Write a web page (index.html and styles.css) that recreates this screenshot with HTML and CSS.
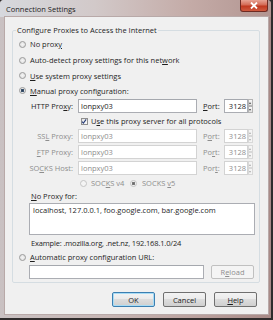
FILE: index.html
```html
<!DOCTYPE html>
<html lang="en">
<head>
    <meta charset="UTF-8">
    <title>Connection Settings</title>
    <link rel="stylesheet" href="styles.css">
</head>
<body>
    <div class="window">
        <div class="titlebar">
            <span class="title">Connection Settings</span>
            <span class="close-btn">
                <svg width="10" height="7" viewBox="0 0 10 7"><path d="M2 0.5 L8 6.5 M8 0.5 L2 6.5" stroke="#fff" stroke-width="1.8"/></svg>
            </span>
        </div>

        <div class="client">
            <fieldset class="group">
                <legend>Configure Proxies to Access the Internet</legend>

                <div class="opt"><span class="radio"></span><span>No prox<u>y</u></span></div>
                <div class="opt"><span class="radio"></span><span>Auto-detect proxy settings for this net<u>w</u>ork</span></div>
                <div class="opt short"><span class="radio"></span><span><u>U</u>se system proxy settings</span></div>
                <div class="opt short"><span class="radio checked"></span><span><u>M</u>anual proxy configuration:</span></div>

                <div class="proxy-row">
                    <label class="plabel">HTTP Pro<u>x</u>y:</label>
                    <div class="field host">lonpxy03</div>
                    <label class="port-label"><u>P</u>ort:</label>
                    <div class="field port">3128</div>
                    <div class="spin"><span class="up"></span><span class="down"></span></div>
                </div>

                <div class="check-row">
                    <span class="checkbox">
                        <svg width="7" height="7" viewBox="0 0 7 7"><path d="M1.2 3.6 L2.8 5.4 L6 1" fill="none" stroke="#2a3f7a" stroke-width="1.3"/></svg>
                    </span>
                    <span>U<u>s</u>e this proxy server for all protocols</span>
                </div>

                <div class="proxy-row disabled">
                    <label class="plabel">SS<u>L</u> Proxy:</label>
                    <div class="field host">lonpxy03</div>
                    <label class="port-label">P<u>o</u>rt:</label>
                    <div class="field port">3128</div>
                    <div class="spin"><span class="up"></span><span class="down"></span></div>
                </div>

                <div class="proxy-row disabled">
                    <label class="plabel"><u>F</u>TP Proxy:</label>
                    <div class="field host">lonpxy03</div>
                    <label class="port-label">Po<u>r</u>t:</label>
                    <div class="field port">3128</div>
                    <div class="spin"><span class="up"></span><span class="down"></span></div>
                </div>

                <div class="proxy-row disabled">
                    <label class="plabel">SO<u>C</u>KS Host:</label>
                    <div class="field host">lonpxy03</div>
                    <label class="port-label">Por<u>t</u>:</label>
                    <div class="field port">3128</div>
                    <div class="spin"><span class="up"></span><span class="down"></span></div>
                </div>

                <div class="socks-row disabled">
                    <span class="radio"></span><span class="socks4">SOC<u>K</u>S v4</span>
                    <span class="radio checked"></span><span>SOCKS <u>v</u>5</span>
                </div>

                <div class="noproxy-label"><u>N</u>o Proxy for:</div>
                <div class="textarea">localhost, 127.0.0.1, foo.google.com, bar.google.com</div>
                <div class="example">Example: .mozilla.org, .net.nz, 192.168.1.0/24</div>

                <div class="opt"><span class="radio"></span><span><u>A</u>utomatic proxy configuration URL:</span></div>
                <div class="url-row">
                    <div class="field url"></div>
                    <div class="btn disabled-btn"><span>R<u>e</u>load</span></div>
                </div>
            </fieldset>

            <div class="buttons">
                <div class="btn default">OK</div>
                <div class="btn">Cancel</div>
                <div class="btn"><span><u>H</u>elp</span></div>
            </div>
        </div>
    </div>
</body>
</html>
```

FILE: styles.css
```css
body {
    margin: 0;
    background-color: #2f2c2c;
    font-family: "Open Sans", "Noto Sans", sans-serif;
    font-size: 7.5px;
    color: #1e1e1e;
}

u {
    text-decoration-thickness: 1px;
    text-underline-offset: 1px;
}

.window {
    width: 271px;
    height: 318px;
    display: flex;
    flex-direction: column;
    background: linear-gradient(90deg, #c9c1c2 0%, #c7b6b4 40%, #b99f9c 75%, #a88a87 100%);
    border-radius: 4px 4px 0 0;
}

.titlebar {
    height: 17px;
    display: flex;
    align-items: flex-start;
    background: linear-gradient(90deg, #d6d8dd 0%, #d2c9c9 35%, #c4aba7 70%, #b29591 100%);
    border-radius: 4px 4px 0 0;
}

.title {
    margin: 4px 0 0 6px;
    line-height: 10px;
    color: #222;
}

.close-btn {
    margin-left: auto;
    margin-right: 3px;
    width: 28px;
    height: 12px;
    box-sizing: border-box;
    border: 1px solid #6e2a22;
    border-top: none;
    border-radius: 0 0 3px 3px;
    background: linear-gradient(180deg, #e7a394 0%, #d46a55 45%, #c0381f 55%, #cf5a40 100%);
    display: flex;
    align-items: center;
    justify-content: center;
}

.client {
    flex: 1;
    margin: 0 3px 4px 5px;
    background-color: #f0f0f0;
    box-shadow: 0 0 0 1px #b8a9a8;
    display: flex;
    flex-direction: column;
}

.group {
    margin: 8px 8px 0 7px;
    padding: 1px 0 3px 0;
    border: 1px solid #d5dde2;
    border-radius: 2px;
    min-width: 0;
}

.group legend {
    margin-left: 3px;
    padding: 0 1px;
    line-height: 10px;
}

.opt {
    height: 16px;
    display: flex;
    align-items: center;
    padding-left: 6px;
}

.opt.short {
    height: 15px;
}

.radio {
    width: 7px;
    height: 7px;
    box-sizing: border-box;
    border: 1px solid #9a9a9a;
    border-radius: 50%;
    background: radial-gradient(circle, #f4f4f4 0%, #dcdcdc 100%);
    margin-right: 4px;
    flex-shrink: 0;
}

.radio.checked {
    background: radial-gradient(circle, #2a3a55 0%, #3c5670 40%, #e6e6e6 55%);
}

.proxy-row {
    height: 16px;
    display: flex;
    align-items: center;
}

.proxy-row > * {
    flex-shrink: 0;
}

.plabel {
    width: 60px;
    text-align: right;
    margin-right: 5px;
}

.port-label {
    width: 15px;
    margin-left: 6px;
    margin-right: 6px;
    white-space: nowrap;
}

.field {
    height: 14px;
    box-sizing: border-box;
    background-color: #fff;
    border: 1px solid #abadb3;
    border-top-color: #a5a8ae;
    display: flex;
    align-items: center;
    padding: 0 2px;
    white-space: nowrap;
    overflow: hidden;
}

.field.host {
    width: 119px;
}

.field.port {
    width: 24px;
    padding: 0 1px;
    justify-content: flex-end;
}

.spin {
    width: 5px;
    height: 14px;
    display: flex;
    flex-direction: column;
}

.spin span {
    flex: 1;
    box-sizing: border-box;
    border: 1px solid #b4b4b4;
    background: linear-gradient(180deg, #f7f7f7, #e2e2e2);
    position: relative;
}

.spin .up::after,
.spin .down::after {
    content: "";
    position: absolute;
    left: 0;
    border-left: 1.5px solid transparent;
    border-right: 1.5px solid transparent;
}

.spin .up::after {
    top: 1.5px;
    border-bottom: 2px solid #4a4a4a;
}

.spin .down::after {
    top: 1.5px;
    border-top: 2px solid #4a4a4a;
}

.disabled {
    color: #8e8e8e;
}

.disabled .field {
    border-color: #d3d3d3;
}

.disabled .spin span {
    border-color: #d8d8d8;
    background: #f4f4f4;
}

.disabled .spin .up::after {
    border-bottom-color: #aaa;
}

.disabled .spin .down::after {
    border-top-color: #aaa;
}

.check-row {
    height: 14px;
    display: flex;
    align-items: center;
    padding-left: 68px;
}

.checkbox {
    width: 7px;
    height: 7px;
    box-sizing: border-box;
    border: 1px solid #8f8f8f;
    background: linear-gradient(135deg, #e4e4e4, #fafafa);
    margin-right: 3px;
    display: flex;
    flex-shrink: 0;
}

.checkbox svg {
    margin: -1px 0 0 -1px;
}

.socks-row {
    height: 14px;
    display: flex;
    align-items: center;
    padding-left: 67px;
}

.socks4 {
    width: 39px;
    white-space: nowrap;
}

.socks-row .radio {
    border-color: #c4c4c4;
    background: #f4f4f4;
}

.socks-row .radio.checked {
    margin-right: 5px;
    background: radial-gradient(circle, #6a6a6a 0%, #7e7e7e 40%, #f0f0f0 55%);
}

.noproxy-label {
    height: 12px;
    line-height: 12px;
    padding-left: 18px;
}

.textarea {
    margin: 1px 0 0 16px;
    width: 226px;
    height: 32px;
    box-sizing: border-box;
    background-color: #fff;
    border: 1px solid #abadb3;
    padding: 1px 3px;
    line-height: 10px;
}

.example {
    margin-top: 2px;
    height: 12px;
    line-height: 12px;
    padding-left: 18px;
    letter-spacing: -0.15px;
}

.url-row {
    display: flex;
    align-items: center;
    padding-left: 16px;
}

.field.url {
    width: 175px;
}

.btn {
    width: 43px;
    height: 15px;
    box-sizing: border-box;
    border: 1px solid #707070;
    border-radius: 2px;
    background: linear-gradient(180deg, #f3f3f3 0%, #ebebeb 45%, #dddddd 50%, #cfcfcf 100%);
    display: flex;
    align-items: center;
    justify-content: center;
}

.url-row .btn {
    margin-left: 7px;
    height: 14px;
}

.btn.disabled-btn {
    color: #8e8e8e;
    border-color: #c0c0c0;
    background: #f4f4f4;
}

.btn.default {
    border-color: #3c7fb1;
    box-shadow: inset 0 0 0 1px #a8dcf5;
}

.buttons {
    display: flex;
    justify-content: flex-end;
    gap: 8px;
    margin-top: 9px;
    padding-right: 11px;
}
```
